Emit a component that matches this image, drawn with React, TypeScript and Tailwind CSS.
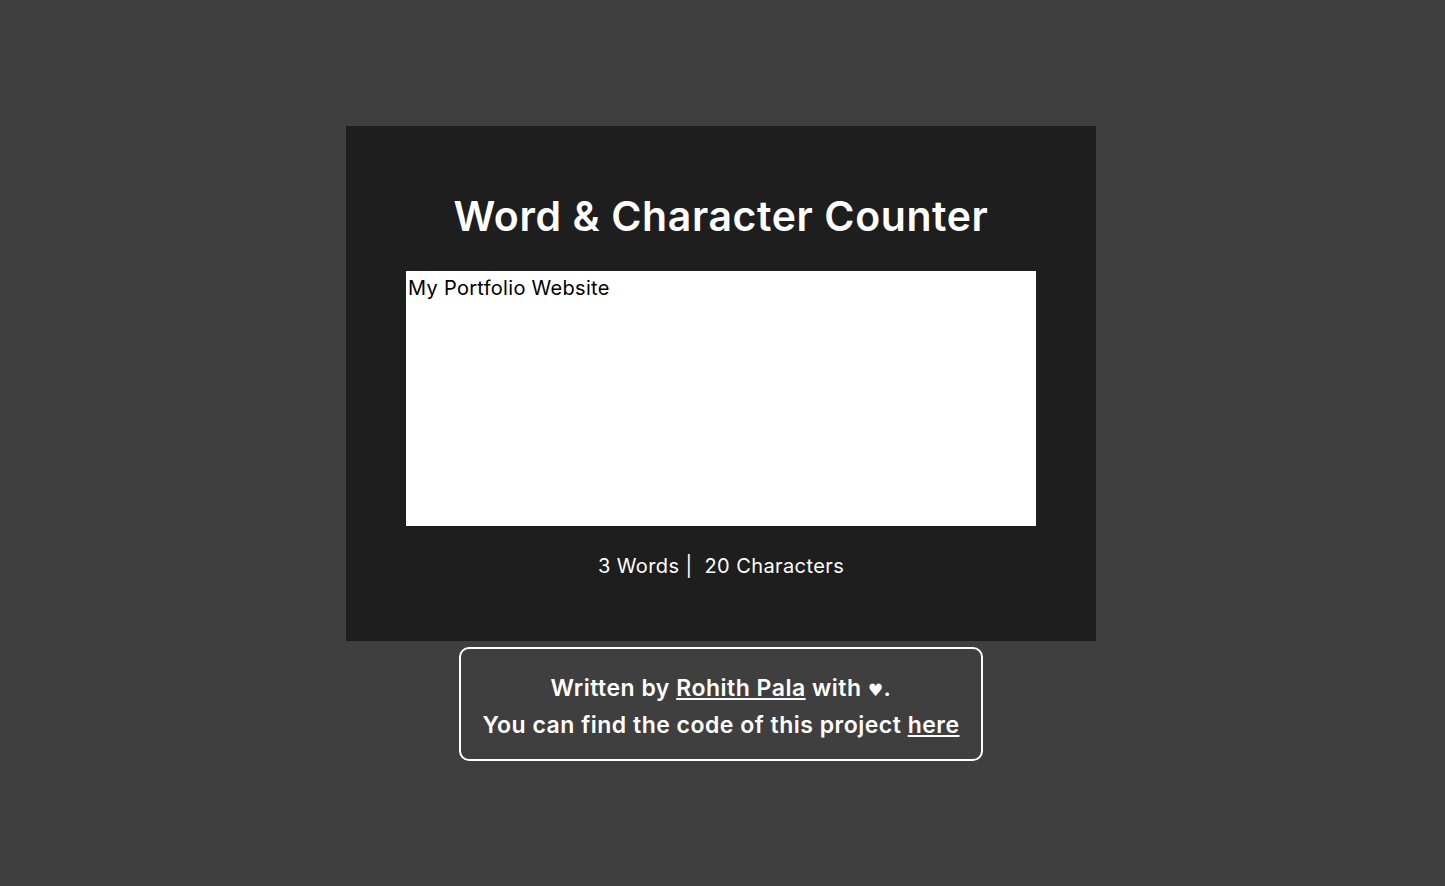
import React, { useState } from "react"

const font = { fontFamily: "Inter, 'Noto Sans', sans-serif" }

function countWords(s: string) {
  return s.trim() === "" ? 0 : s.trim().split(/\s+/).length
}

export default function App() {
  const [text, setText] = useState("My Portfolio Website")

  return (
    <div className="min-h-screen bg-[#3f3f3f] flex flex-col items-center pt-[126px] pr-[3px]" style={font}>
      <div className="w-[750px] bg-[#1e1e1e] flex flex-col items-center pt-[66px] pb-[60px]">
        <h1 className="text-[41px] leading-[48px] font-semibold text-white tracking-[0.6px]">
          Word &amp; Character Counter
        </h1>
        <textarea
          value={text}
          onChange={(e) => setText(e.target.value)}
          className="mt-[31px] w-[630px] h-[255px] bg-white text-black text-[20px] leading-[30px] tracking-[0.3px] px-[2px] py-[2px] resize-none outline-none block"
          style={font}
        />
        <p className="mt-[25px] text-white text-[20px] leading-[30px] tracking-[0.4px]">
          {countWords(text)} Words |&nbsp; {text.length} Characters
        </p>
      </div>
      <div className="mt-[6px] w-[524px] h-[114px] border-2 border-white rounded-[10px] flex flex-col items-center pt-[22px] text-white text-[23px] leading-[35px] font-semibold tracking-[0.5px]">
        <p>
          Written by <a href="#" className="underline">Rohith Pala</a> with{" "}
          <span className="text-[17px]" style={{ fontFamily: "'DejaVu Sans', sans-serif" }}>♥</span>.
        </p>
        <p>
          You can find the code of this project <a href="#" className="underline">here</a>
        </p>
      </div>
    </div>
  )
}
